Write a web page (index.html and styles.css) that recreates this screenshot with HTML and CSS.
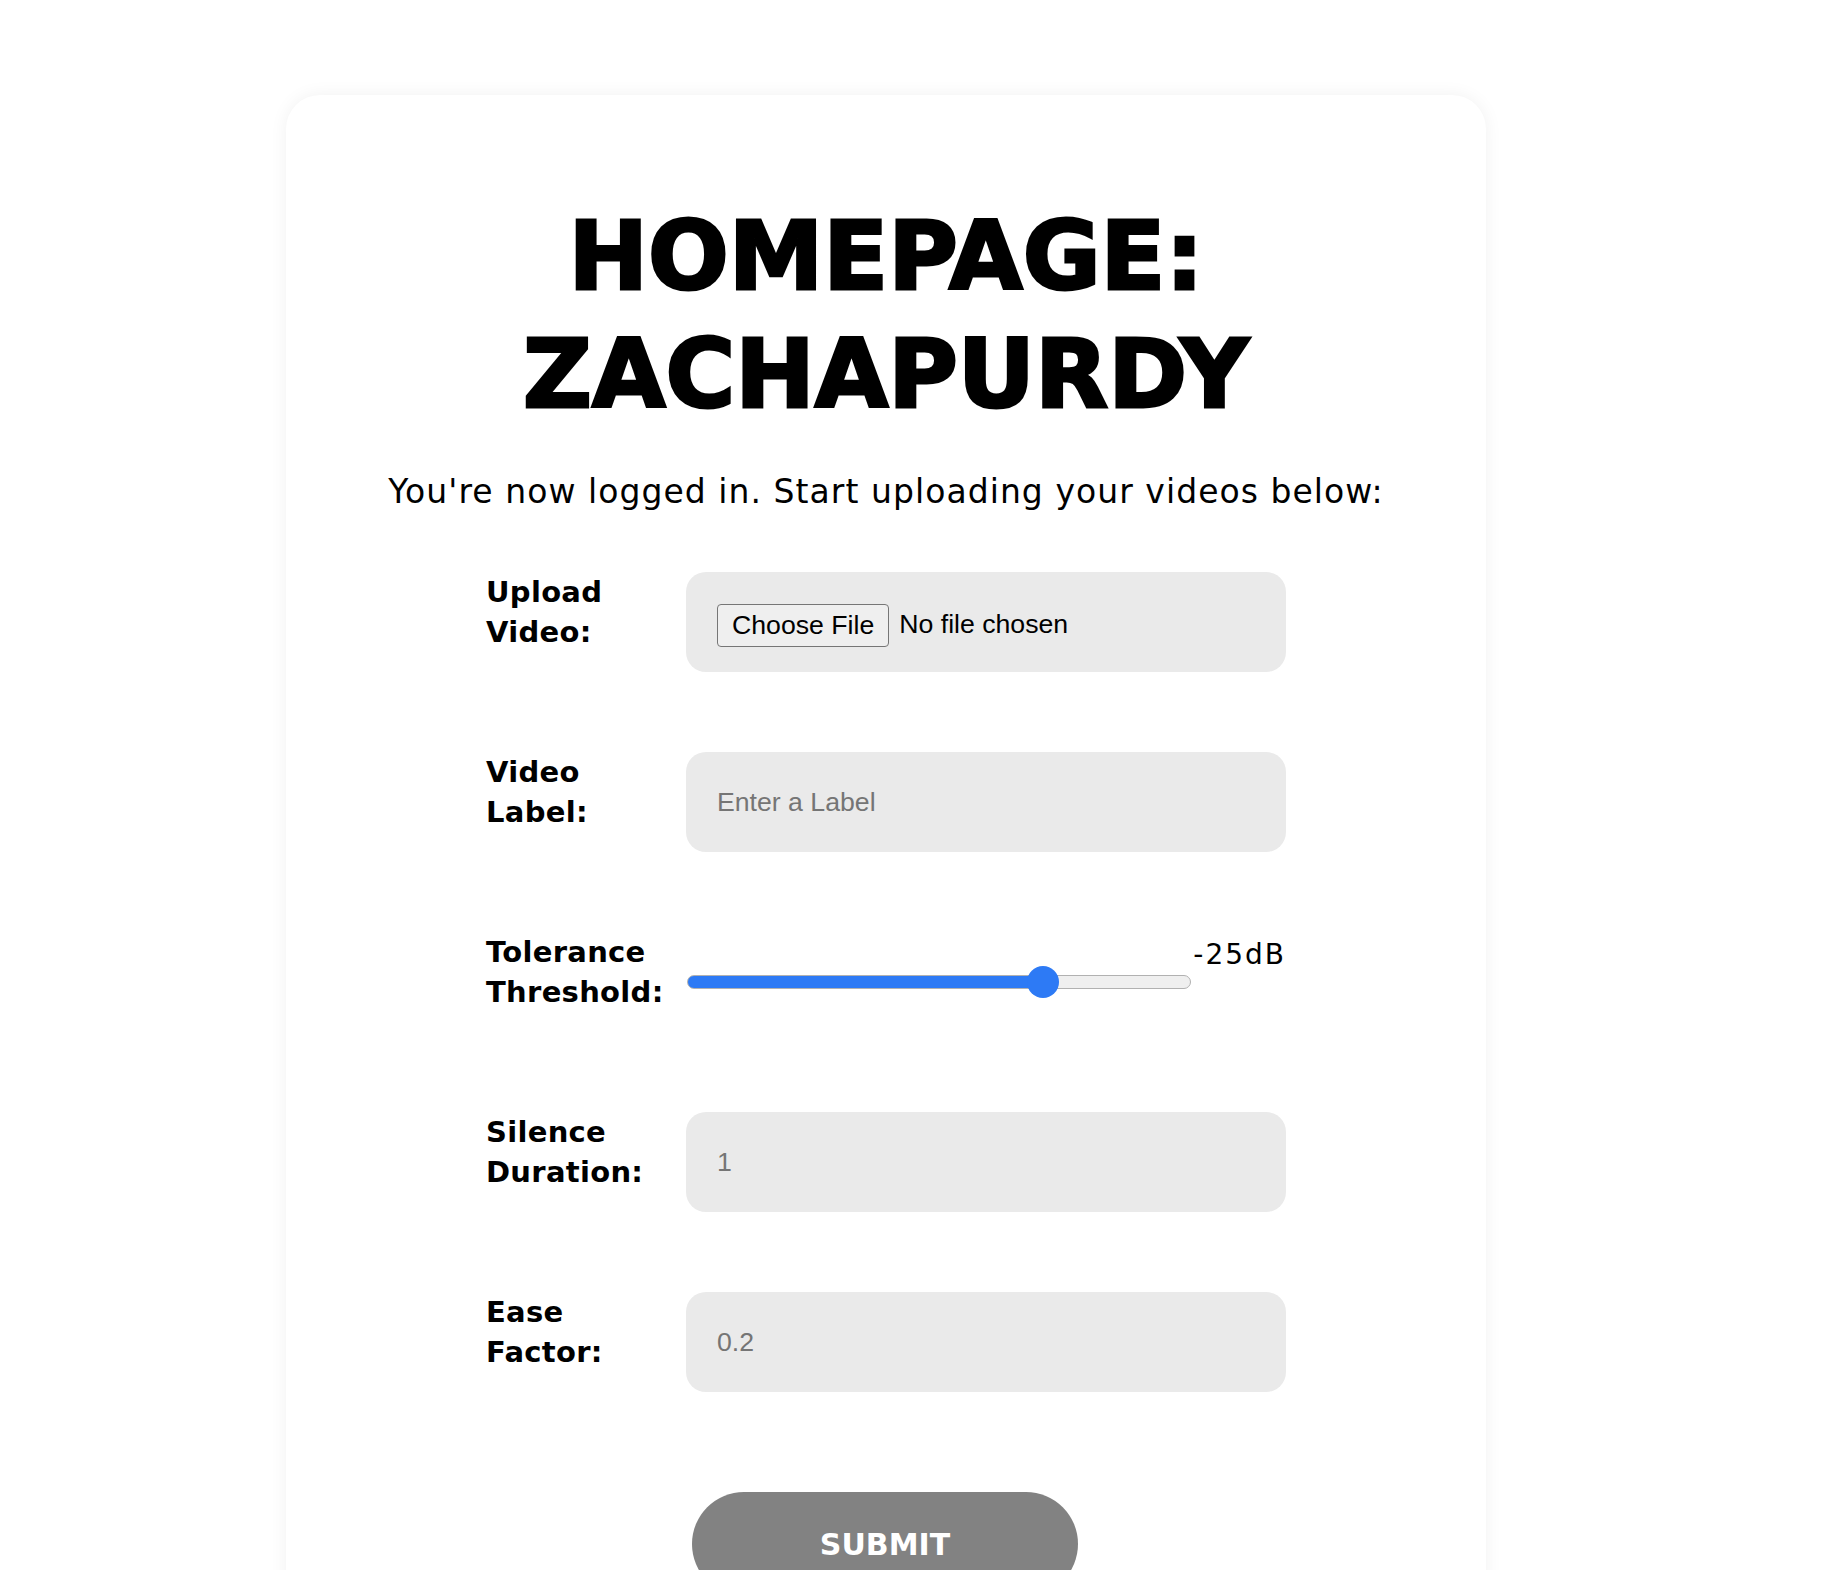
FILE: index.html
```html
<!DOCTYPE html>
<html lang="en">
<head>
<meta charset="utf-8">
<title>Homepage</title>
<link rel="stylesheet" href="styles.css">
</head>
<body>
<main class="card">
  <h1 class="title">HOMEPAGE:<br>ZACHAPURDY</h1>
  <p class="subtitle">You're now logged in. Start uploading your videos below:</p>
  <form class="form">
    <div class="row">
      <label class="label" for="video">Upload Video:</label>
      <input class="field file" id="video" type="file">
    </div>
    <div class="row">
      <label class="label" for="lbl">Video Label:</label>
      <input class="field" id="lbl" type="text" placeholder="Enter a Label">
    </div>
    <div class="row">
      <label class="label" for="tol">Tolerance Threshold:</label>
      <div class="slider-wrap">
        <input class="slider" id="tol" type="range" min="-90" max="0" value="-25" style="--fill: 70.8%">
        <span class="slider-value">-25dB</span>
      </div>
    </div>
    <div class="row">
      <label class="label" for="sil">Silence Duration:</label>
      <input class="field" id="sil" type="text" placeholder="1">
    </div>
    <div class="row">
      <label class="label" for="ease">Ease Factor:</label>
      <input class="field" id="ease" type="text" placeholder="0.2">
    </div>
    <div class="actions">
      <button class="submit" type="button">SUBMIT</button>
    </div>
  </form>
</main>
</body>
</html>
```

FILE: styles.css
```css
html, body {
  margin: 0;
  padding: 0;
  background: #ffffff;
}

body {
  font-family: "DejaVu Sans", sans-serif;
  color: #000;
}

.card {
  width: 1200px;
  box-sizing: border-box;
  margin: 95px 0 0 286px;
  padding: 102px 0 120px;
  background: #fff;
  border-radius: 34px;
  box-shadow: 0 0 18px rgba(0, 0, 0, 0.06);
}

.title {
  margin: 0;
  text-align: center;
  font-family: "DejaVu Sans", sans-serif;
  font-weight: bold;
  font-size: 95px;
  line-height: 118px;
  letter-spacing: 0;
  -webkit-text-stroke: 3px #000;
}

.subtitle {
  margin: 39px 0 0;
  text-align: center;
  font-size: 33px;
  line-height: 40px;
  letter-spacing: 1.05px;
}

.form {
  width: 800px;
  margin: 60px auto 0;
  display: flex;
  flex-direction: column;
  gap: 80px;
}

.row {
  display: grid;
  grid-template-columns: 200px 600px;
  height: 100px;
}

.label {
  padding-right: 12px;
  font-weight: bold;
  font-size: 29px;
  line-height: 40px;
  letter-spacing: 0.3px;
}

.field {
  width: 600px;
  height: 100px;
  box-sizing: border-box;
  margin: 0;
  padding: 0 31px;
  border: none;
  border-radius: 20px;
  background: #eaeaea;
  font-family: "Liberation Sans", Arial, sans-serif;
  font-size: 26.67px;
  color: #000;
  outline: none;
}

.field::placeholder {
  color: #757575;
}

.file {
  display: flex;
  align-items: center;
  padding-top: 5px;
  line-height: 95px;
}

.file::file-selector-button {
  font-family: "Liberation Sans", Arial, sans-serif;
  font-size: 26.67px;
  color: #000;
  background: #efefef;
  border: 1px solid #767676;
  border-radius: 4px;
  padding: 4px 14px;
  margin: 0 10px 0 0;
  height: 43px;
  vertical-align: middle;
}

.slider-wrap {
  display: flex;
  justify-content: space-between;
  align-items: flex-start;
  height: 100px;
}

.slider {
  -webkit-appearance: none;
  appearance: none;
  width: 504px;
  height: 32px;
  margin: 34px 0 0 1px;
  padding: 0;
  background: transparent;
}

.slider::-webkit-slider-runnable-track {
  box-sizing: border-box;
  height: 14px;
  border-radius: 7px;
  border: 1px solid #b1b1b1;
  background: linear-gradient(#2d7af5, #2d7af5) 0 0 / var(--fill) 100% no-repeat, #efefef;
}

.slider::-webkit-slider-thumb {
  -webkit-appearance: none;
  appearance: none;
  width: 32px;
  height: 32px;
  margin-top: -10px;
  border-radius: 50%;
  background: #2d7af5;
  border: none;
}

.slider-value {
  margin-top: 6px;
  font-size: 28px;
  line-height: 34px;
  letter-spacing: 2px;
}

.actions {
  display: flex;
  justify-content: center;
  margin-top: 20px;
}

.submit {
  width: 386px;
  height: 104px;
  border: none;
  border-radius: 52px;
  background: #828282;
  color: #fff;
  font-family: "DejaVu Sans", sans-serif;
  font-weight: bold;
  font-size: 30px;
  margin-left: -2px;
}
```
